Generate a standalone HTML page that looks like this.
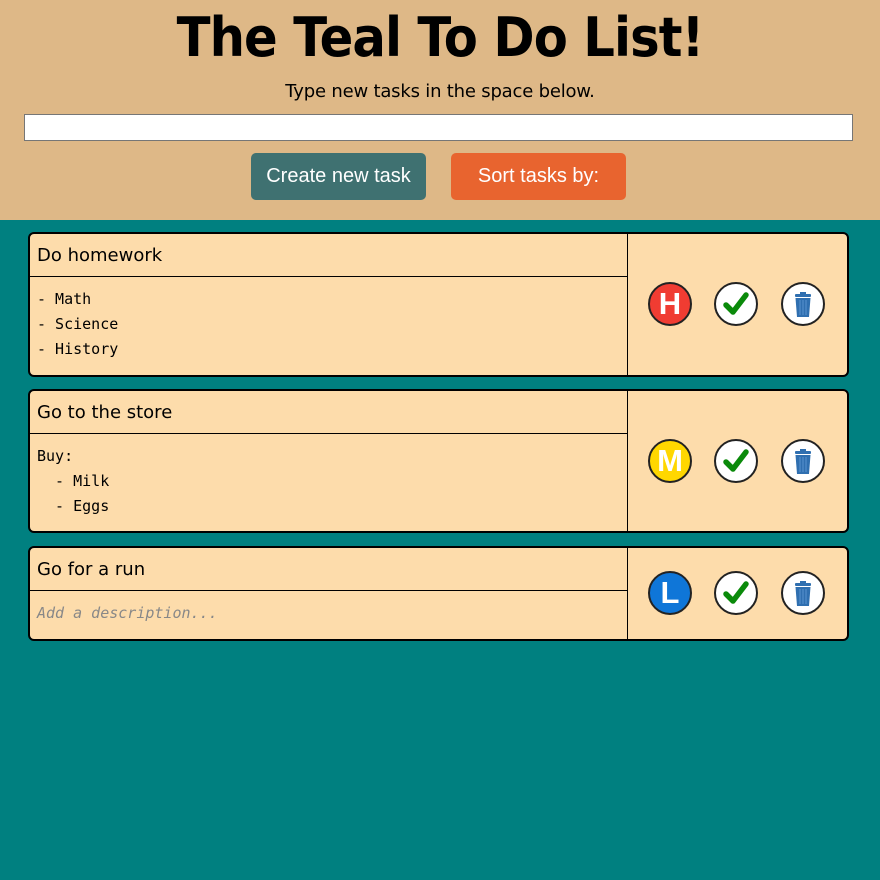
<!DOCTYPE html>
<html><head><style>
body{margin:0;width:880px;height:880px;background:#008080;font-family:"DejaVu Sans","Liberation Sans",sans-serif;overflow:hidden}
.hdr{position:absolute;left:0;top:0;width:880px;height:220px;background:#DEB887}
h1{position:absolute;top:2px;left:0;width:880px;text-align:center;margin:0;font-size:54px;line-height:72px;font-weight:bold;letter-spacing:-1px;transform:scaleX(0.92)}
.sub{position:absolute;top:80px;width:880px;text-align:center;font-size:18px;line-height:24px;letter-spacing:-0.2px}
.inp{position:absolute;left:24px;top:114px;width:827px;height:25px;background:#fff;border:1px solid #767676}
.btn{position:absolute;top:153px;width:175px;height:47px;border-radius:5px;color:#fff;font-family:"Liberation Sans",sans-serif;font-size:20px;line-height:47px;text-align:center}
.card{position:absolute;left:28px;width:817px;background:#FDDCAB;border:2px solid #000;border-radius:6px}
.left{position:absolute;left:0;top:0;bottom:0;width:597px;border-right:1px solid #000}
.t{height:42px;border-bottom:1px solid #000;font-size:18px;line-height:44px;padding-left:7px}
.d{font-family:"DejaVu Sans Mono","Liberation Mono",monospace;font-size:15px;line-height:25px;padding:10px 7px;white-space:pre}
.ic{position:absolute;width:44px;height:44px;border-radius:50%;border:2px solid #222;box-sizing:border-box;font-family:"Liberation Sans",sans-serif;font-weight:bold;color:#fff;font-size:31px;line-height:40px;text-align:center;background:#fff}
.ic svg{position:absolute;left:0;top:0}
</style></head><body>
<div class="hdr">
<h1>The Teal To Do List!</h1>
<div class="sub">Type new tasks in the space below.</div>
<div class="inp"></div>
<div class="btn" style="left:251px;background:#3F7171">Create new task</div>
<div class="btn" style="left:451px;background:#E8642F">Sort tasks by:</div>
</div>

<div class="card" style="top:232px;height:141px"><div class="left"><div class="t">Do homework</div><div class="d">- Math
- Science
- History</div></div></div>
<div class="card" style="top:389px;height:140px"><div class="left"><div class="t">Go to the store</div><div class="d">Buy:
  - Milk
  - Eggs</div></div></div>
<div class="card" style="top:546px;height:91px"><div class="left"><div class="t">Go for a run</div><div class="d" style="color:#888;font-style:italic">Add a description...</div></div></div>

<div class="ic" style="left:648px;top:282px;background:#F03C32">H</div>
<div class="ic" style="left:648px;top:439px;background:#FFD700">M</div>
<div class="ic" style="left:648px;top:571px;background:#0F76D8">L</div>

<svg width="0" height="0" style="position:absolute"><defs>
<g id="chk"><path d="M10 21 L17 28 L30 11" fill="none" stroke="#0A8A0A" stroke-width="5.5" stroke-linecap="round" stroke-linejoin="round"/></g>
<g id="trash"><rect x="12" y="10" width="16" height="3" rx="1" fill="#2F6FB0"/><rect x="17" y="8" width="6" height="3" fill="#2F6FB0"/><path d="M12.5 14 H27.5 L26 33 H14 Z" fill="#2F6FB0"/><path d="M17 16V31M20 16V31M23 16V31" stroke="#5A93CF" stroke-width="1"/></g>
</defs></svg>
<div class="ic" style="left:714px;top:282px"><svg width="40" height="40" viewBox="0 0 40 40"><use href="#chk"/></svg></div>
<div class="ic" style="left:714px;top:439px"><svg width="40" height="40" viewBox="0 0 40 40"><use href="#chk"/></svg></div>
<div class="ic" style="left:714px;top:571px"><svg width="40" height="40" viewBox="0 0 40 40"><use href="#chk"/></svg></div>
<div class="ic" style="left:781px;top:282px"><svg width="40" height="40" viewBox="0 0 40 40"><use href="#trash"/></svg></div>
<div class="ic" style="left:781px;top:439px"><svg width="40" height="40" viewBox="0 0 40 40"><use href="#trash"/></svg></div>
<div class="ic" style="left:781px;top:571px"><svg width="40" height="40" viewBox="0 0 40 40"><use href="#trash"/></svg></div>
</body></html>
